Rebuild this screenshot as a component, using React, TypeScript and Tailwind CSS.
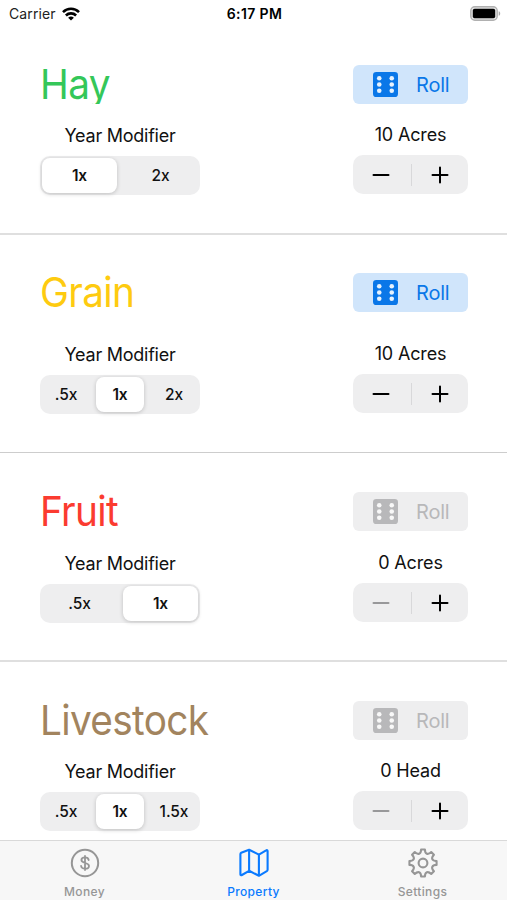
import { useState } from "react";
import clsx from "clsx";

type Property = {
  name: string;
  unit: string;
  amount: number;
  modifiers: string[];
  selected: number;
  titleClass: string;
  // spacing between the title row and the labels, and below the controls
  headClass: string;
  rowClass: string;
};

const PROPERTIES: Property[] = [
  {
    name: "Hay",
    unit: "Acres",
    amount: 10,
    modifiers: ["1x", "2x"],
    selected: 0,
    titleClass: "text-[#34c759] h-[39px] overflow-hidden",
    headClass: "mb-[18px]",
    rowClass: "h-[207px] pt-[37px] border-b-2 border-[#dfdfdf]",
  },
  {
    name: "Grain",
    unit: "Acres",
    amount: 10,
    modifiers: [".5x", "1x", "2x"],
    selected: 1,
    titleClass: "text-[#fecb10]",
    headClass: "mb-[29px]",
    rowClass: "h-[218px] pt-[38px] border-b border-[#cdcdcd]",
  },
  {
    name: "Fruit",
    unit: "Acres",
    amount: 0,
    modifiers: [".5x", "1x"],
    selected: 1,
    titleClass: "text-[#fb3b30]",
    headClass: "mb-[19px]",
    rowClass: "h-[209px] pt-[39px] border-b-2 border-[#dfdfdf]",
  },
  {
    name: "Livestock",
    unit: "Head",
    amount: 0,
    modifiers: [".5x", "1x", "1.5x"],
    selected: 1,
    titleClass: "text-[#a2845e]",
    headClass: "mb-[18px]",
    rowClass: "h-[178px] pt-[39px]",
  },
];

function StatusBar() {
  return (
    <header className="flex h-7 shrink-0 items-center justify-between pl-[9px] pr-[6px] text-black">
      <div className="flex w-40 items-center gap-[6px] pb-px">
        <span className="text-[14px] tracking-[0.1px] text-[#222]">Carrier</span>
        <svg width="18" height="14" viewBox="0 0 18 14" fill="none" stroke="currentColor" strokeWidth="2.6">
          <path d="M1 5.1a11.4 11.4 0 0 1 16 0" />
          <path d="M3.9 8.5a7.3 7.3 0 0 1 10.2 0" />
          <path d="M9 13.6 6.1 10.8a4.2 4.2 0 0 1 5.8 0z" fill="currentColor" stroke="none" />
        </svg>
      </div>
      <span className="pr-px pb-px text-[14px] font-semibold tracking-[0.4px]">6:17 PM</span>
      <div className="flex w-40 justify-end pb-[2px]">
        <svg width="31" height="15" viewBox="0 0 31 15">
          <rect x="0.8" y="0.8" width="26.4" height="13.4" rx="4" fill="#e4e4e4" stroke="#b0b0b0" strokeWidth="1.4" />
          <rect x="2.8" y="2.8" width="22.4" height="9.4" rx="1.8" fill="#000" />
          <path d="M28.7 5.2c2 .6 2 4 0 4.6z" fill="#a8a8a8" />
        </svg>
      </div>
    </header>
  );
}

function DiceIcon() {
  return (
    <svg width="25" height="25" viewBox="0 0 24 24">
      <rect width="24" height="24" rx="3.2" fill="currentColor" />
      {[6, 18].map((x) =>
        [6, 12, 18].map((y) => <circle key={`${x}-${y}`} cx={x} cy={y} r="2.2" fill="#fff" fillOpacity="0.9" />)
      )}
    </svg>
  );
}

function RollButton({ disabled }: { disabled: boolean }) {
  return (
    <button
      type="button"
      disabled={disabled}
      className={clsx(
        "flex h-[39px] w-[115px] items-center rounded-[6px] pl-5",
        disabled ? "bg-[#eeeeef] text-[#b8b8ba]" : "bg-[#d0e5fb] text-[#0a77e8]"
      )}
    >
      <DiceIcon />
      <span className="ml-[18px] text-[20px] leading-6 tracking-[-0.2px]">Roll</span>
    </button>
  );
}

type SegmentedProps = {
  options: string[];
  value: number;
  onChange: (index: number) => void;
};

function Segmented({ options, value, onChange }: SegmentedProps) {
  return (
    <div className="flex h-[39px] w-40 gap-[6px] rounded-[10px] bg-[#eeeeef] p-[2px]">
      {options.map((option, i) => (
        <button
          key={option}
          type="button"
          onClick={() => onChange(i)}
          className={clsx(
            "flex-1 basis-0 rounded-[8px] text-[15.5px] tracking-[-0.1px]",
            i === value
              ? "bg-white font-semibold shadow-[0_1px_4px_rgba(0,0,0,0.2)]"
              : "font-medium"
          )}
        >
          {option}
        </button>
      ))}
    </div>
  );
}

type StepperProps = {
  value: number;
  onChange: (value: number) => void;
};

function Stepper({ value, onChange }: StepperProps) {
  return (
    <div className="flex h-[39px] w-[115px] items-center rounded-[10px] bg-[#eeeeef]">
      <button
        type="button"
        aria-label="Decrement"
        disabled={value === 0}
        onClick={() => onChange(value - 1)}
        className="flex h-full flex-1 items-center justify-center pr-px text-black disabled:text-[#98989a]"
      >
        <svg width="18" height="18" viewBox="0 0 18 18" stroke="currentColor" strokeWidth="2" strokeLinecap="round">
          <path d="M1.5 9h15" />
        </svg>
      </button>
      <div className="h-[22px] w-px bg-[#d8d8da]" />
      <button
        type="button"
        aria-label="Increment"
        onClick={() => onChange(value + 1)}
        className="flex h-full flex-1 items-center justify-center text-black"
      >
        <svg width="18" height="18" viewBox="0 0 18 18" stroke="currentColor" strokeWidth="2" strokeLinecap="round">
          <path d="M1.5 9h15M9 1.5v15" />
        </svg>
      </button>
    </div>
  );
}

function PropertyRow({ property }: { property: Property }) {
  const [modifier, setModifier] = useState(property.selected);
  const [amount, setAmount] = useState(property.amount);

  return (
    <section className={clsx("shrink-0 pl-10 pr-[39px]", property.rowClass)}>
      <div className={clsx("flex h-[39px] items-start justify-between", property.headClass)}>
        <h2
          className={clsx(
            "origin-left scale-x-[0.945] text-[41px] leading-[39px] font-normal tracking-[-0.7px]",
            property.titleClass
          )}
        >
          {property.name}
        </h2>
        <RollButton disabled={amount === 0} />
      </div>
      <div className="flex justify-between">
        <div className="flex flex-col items-center gap-2 pt-[2px]">
          <span className="text-[18px] leading-6 tracking-[-0.25px]">Year Modifier</span>
          <Segmented options={property.modifiers} value={modifier} onChange={setModifier} />
        </div>
        <div className="flex flex-col items-center gap-2 pt-px">
          <span className="text-[18px] leading-6 tracking-[-0.15px]">
            {amount} {property.unit}
          </span>
          <Stepper value={amount} onChange={setAmount} />
        </div>
      </div>
    </section>
  );
}

function MoneyIcon() {
  return (
    <svg width="30" height="30" viewBox="0 0 30 30" fill="none" stroke="currentColor">
      <circle cx="15" cy="15" r="13.2" strokeWidth="2" />
      <path
        d="M18.7 12c-.3-1.7-1.7-2.6-3.7-2.6-2.2 0-3.6 1.1-3.6 2.7 0 3.8 7.6 2 7.6 5.8 0 1.8-1.6 2.8-3.9 2.8s-3.8-1-4-2.7M15 8v14"
        strokeWidth="1.8"
        strokeLinecap="round"
      />
    </svg>
  );
}

function MapIcon() {
  return (
    <svg width="30" height="30" viewBox="0 0 30 30" fill="none" stroke="currentColor" strokeWidth="2.1" strokeLinejoin="round">
      <path d="M1.4 6.2v20c0 1 .7 1.3 1.5.8l7.2-4.2 9.8 5 7.9-4.6c.6-.4.8-.8.8-1.4V3.2c0-1-.7-1.3-1.5-.8l-7.2 4.2-9.8-4.8-7.9 3c-.6.3-.8.8-.8 1.4z" />
      <path d="M10.1 2v20.8M19.9 6.6v21" />
    </svg>
  );
}

const polar = (radius: number, degrees: number) => {
  const angle = ((degrees - 90) * Math.PI) / 180;
  return `${(15 + radius * Math.cos(angle)).toFixed(2)} ${(15 + radius * Math.sin(angle)).toFixed(2)}`;
};

// eight teeth, 45 degrees apart, with a rounded valley after each
const GEAR_PATH =
  `M${polar(13.7, -8)}` +
  Array.from({ length: 8 }, (_, i) => {
    const a = i * 45;
    return `L${polar(13.7, a + 8)}C${polar(9.1, a + 13)} ${polar(9.1, a + 32)} ${polar(13.7, a + 37)}`;
  }).join("") +
  "Z";

function GearIcon() {
  return (
    <svg width="30" height="30" viewBox="0 0 30 30" fill="none" stroke="currentColor" strokeWidth="2.1" strokeLinejoin="round">
      <path d={GEAR_PATH} />
      <circle cx="15" cy="15" r="4.4" />
    </svg>
  );
}

const TABS = [
  { label: "Money", icon: <MoneyIcon /> },
  { label: "Property", icon: <MapIcon /> },
  { label: "Settings", icon: <GearIcon /> },
];

function TabBar() {
  const [active, setActive] = useState("Property");

  return (
    <nav className="flex h-[60px] shrink-0 border-t border-[#d9d9d9] bg-[#f7f7f7]">
      {TABS.map((tab) => (
        <button
          key={tab.label}
          type="button"
          onClick={() => setActive(tab.label)}
          className={clsx(
            "flex flex-1 flex-col items-center pt-[7px] text-[12px] leading-4 font-medium tracking-[0.35px]",
            tab.label === active ? "text-[#0a7aff]" : "text-[#969696]"
          )}
        >
          {tab.icon}
          <span className="mt-[6px]">{tab.label}</span>
        </button>
      ))}
    </nav>
  );
}

export default function App() {
  return (
    <div className="flex h-[900px] w-[507px] flex-col overflow-hidden bg-white font-[Inter,sans-serif] text-[#111]">
      <StatusBar />
      <main className="flex min-h-0 flex-1 flex-col overflow-hidden">
        {PROPERTIES.map((property) => (
          <PropertyRow key={property.name} property={property} />
        ))}
      </main>
      <TabBar />
    </div>
  );
}
